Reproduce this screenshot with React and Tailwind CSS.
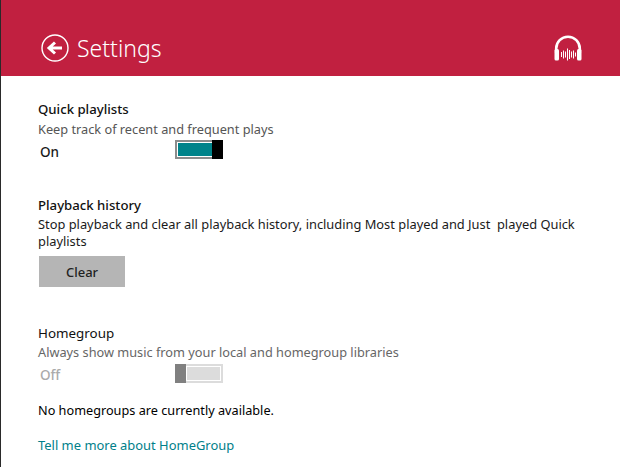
export default function App() {
  return (
    <div className="w-[620px] h-[467px] overflow-hidden bg-white border-l border-[#2a2a2a] flex flex-col font-['Noto_Sans','Open_Sans',sans-serif] text-[12.8px] leading-[18px] text-[#1a1a1a]">
      <header className="h-[76px] shrink-0 bg-[#c12040] flex items-center pl-[40px] pr-[37px] pt-[19px] text-white">
        <svg width="28" height="28" viewBox="0 0 28 28" fill="none" stroke="white">
          <circle cx="14" cy="14" r="13" strokeWidth="1.4" />
          <path d="M21 14H8M14 8.5L8 14l6 5.5" strokeWidth="3" />
        </svg>
        <h1 className="ml-[8px] text-[23px] leading-[34px] font-light">Settings</h1>
        <svg className="ml-auto" width="30" height="28" viewBox="0 0 30 28" fill="none" stroke="white">
          <path d="M3.2 19V14.5a11.8 11.8 0 0 1 23.6 0V19" strokeWidth="2.6" />
          <rect x="1.5" y="15" width="4.5" height="11.5" rx="1.5" fill="white" stroke="none" />
          <rect x="24" y="15" width="4.5" height="11.5" rx="1.5" fill="white" stroke="none" />
          <path d="M8.5 18v5M10.5 16.5v8M12.5 17.5v6M14.5 14.5v12M16.5 16v9M18.5 17.5v6M20.5 16.5v8M22.5 18.5v4" strokeWidth="1" />
        </svg>
      </header>
      <main className="pl-[37px] pr-[30px] pt-[24px] flex flex-col">
        <section>
          <h2 className="font-medium text-[13.2px] text-[#111] mb-[2px]">Quick playlists</h2>
          <p className="text-[#555] text-[12.75px]">Keep track of recent and frequent plays</p>
          <div className="flex items-center mt-[2px] h-[19px]">
            <span className="w-[137px] pl-[2px] pt-[4px] font-medium text-[13.5px]">On</span>
            <div className="w-[48px] h-[19px] border-2 border-[#8c8c8c] border-r-0 bg-white p-[1px] pr-0 flex">
              <div className="flex-1 bg-[#00838a]" />
              <div className="w-[11px] -my-[3px] bg-black" />
            </div>
          </div>
        </section>
        <section className="mt-[37px]">
          <h2 className="font-medium text-[13.2px] text-[#111] mb-[2px]">Playback history</h2>
          <p className="leading-[17px] text-[12.85px]">Stop playback and clear all playback history, including Most played and Just&nbsp; played Quick playlists</p>
          <button className="block ml-px mt-[6px] w-[86px] h-[31px] bg-[#b5b5b5] font-medium text-[13px] text-[#222]">Clear</button>
        </section>
        <section className="mt-[37px]">
          <h2 className="text-[#111] text-[13.4px] mb-[1px]">Homegroup</h2>
          <p className="text-[#666] text-[12.75px]">Always show music from your local and homegroup libraries</p>
          <div className="flex items-center mt-[3px] h-[19px]">
            <span className="w-[137px] pl-[2px] pt-[2px] font-medium text-[13.5px] text-[#aaa]">Off</span>
            <div className="w-[48px] h-[19px] border-2 border-[#dcdcdc] bg-white flex">
              <div className="w-[11px] -my-[2px] -ml-[2px] bg-[#808080]" />
              <div className="flex-1 mx-[1px] my-[1px] bg-[#dcdcdc]" />
            </div>
          </div>
          <p className="mt-[18px] text-black text-[12.7px]">No homegroups are currently available.</p>
          <a className="block mt-[17px] text-[#00808a] text-[12.95px]">Tell me more about HomeGroup</a>
        </section>
      </main>
    </div>
  );
}
